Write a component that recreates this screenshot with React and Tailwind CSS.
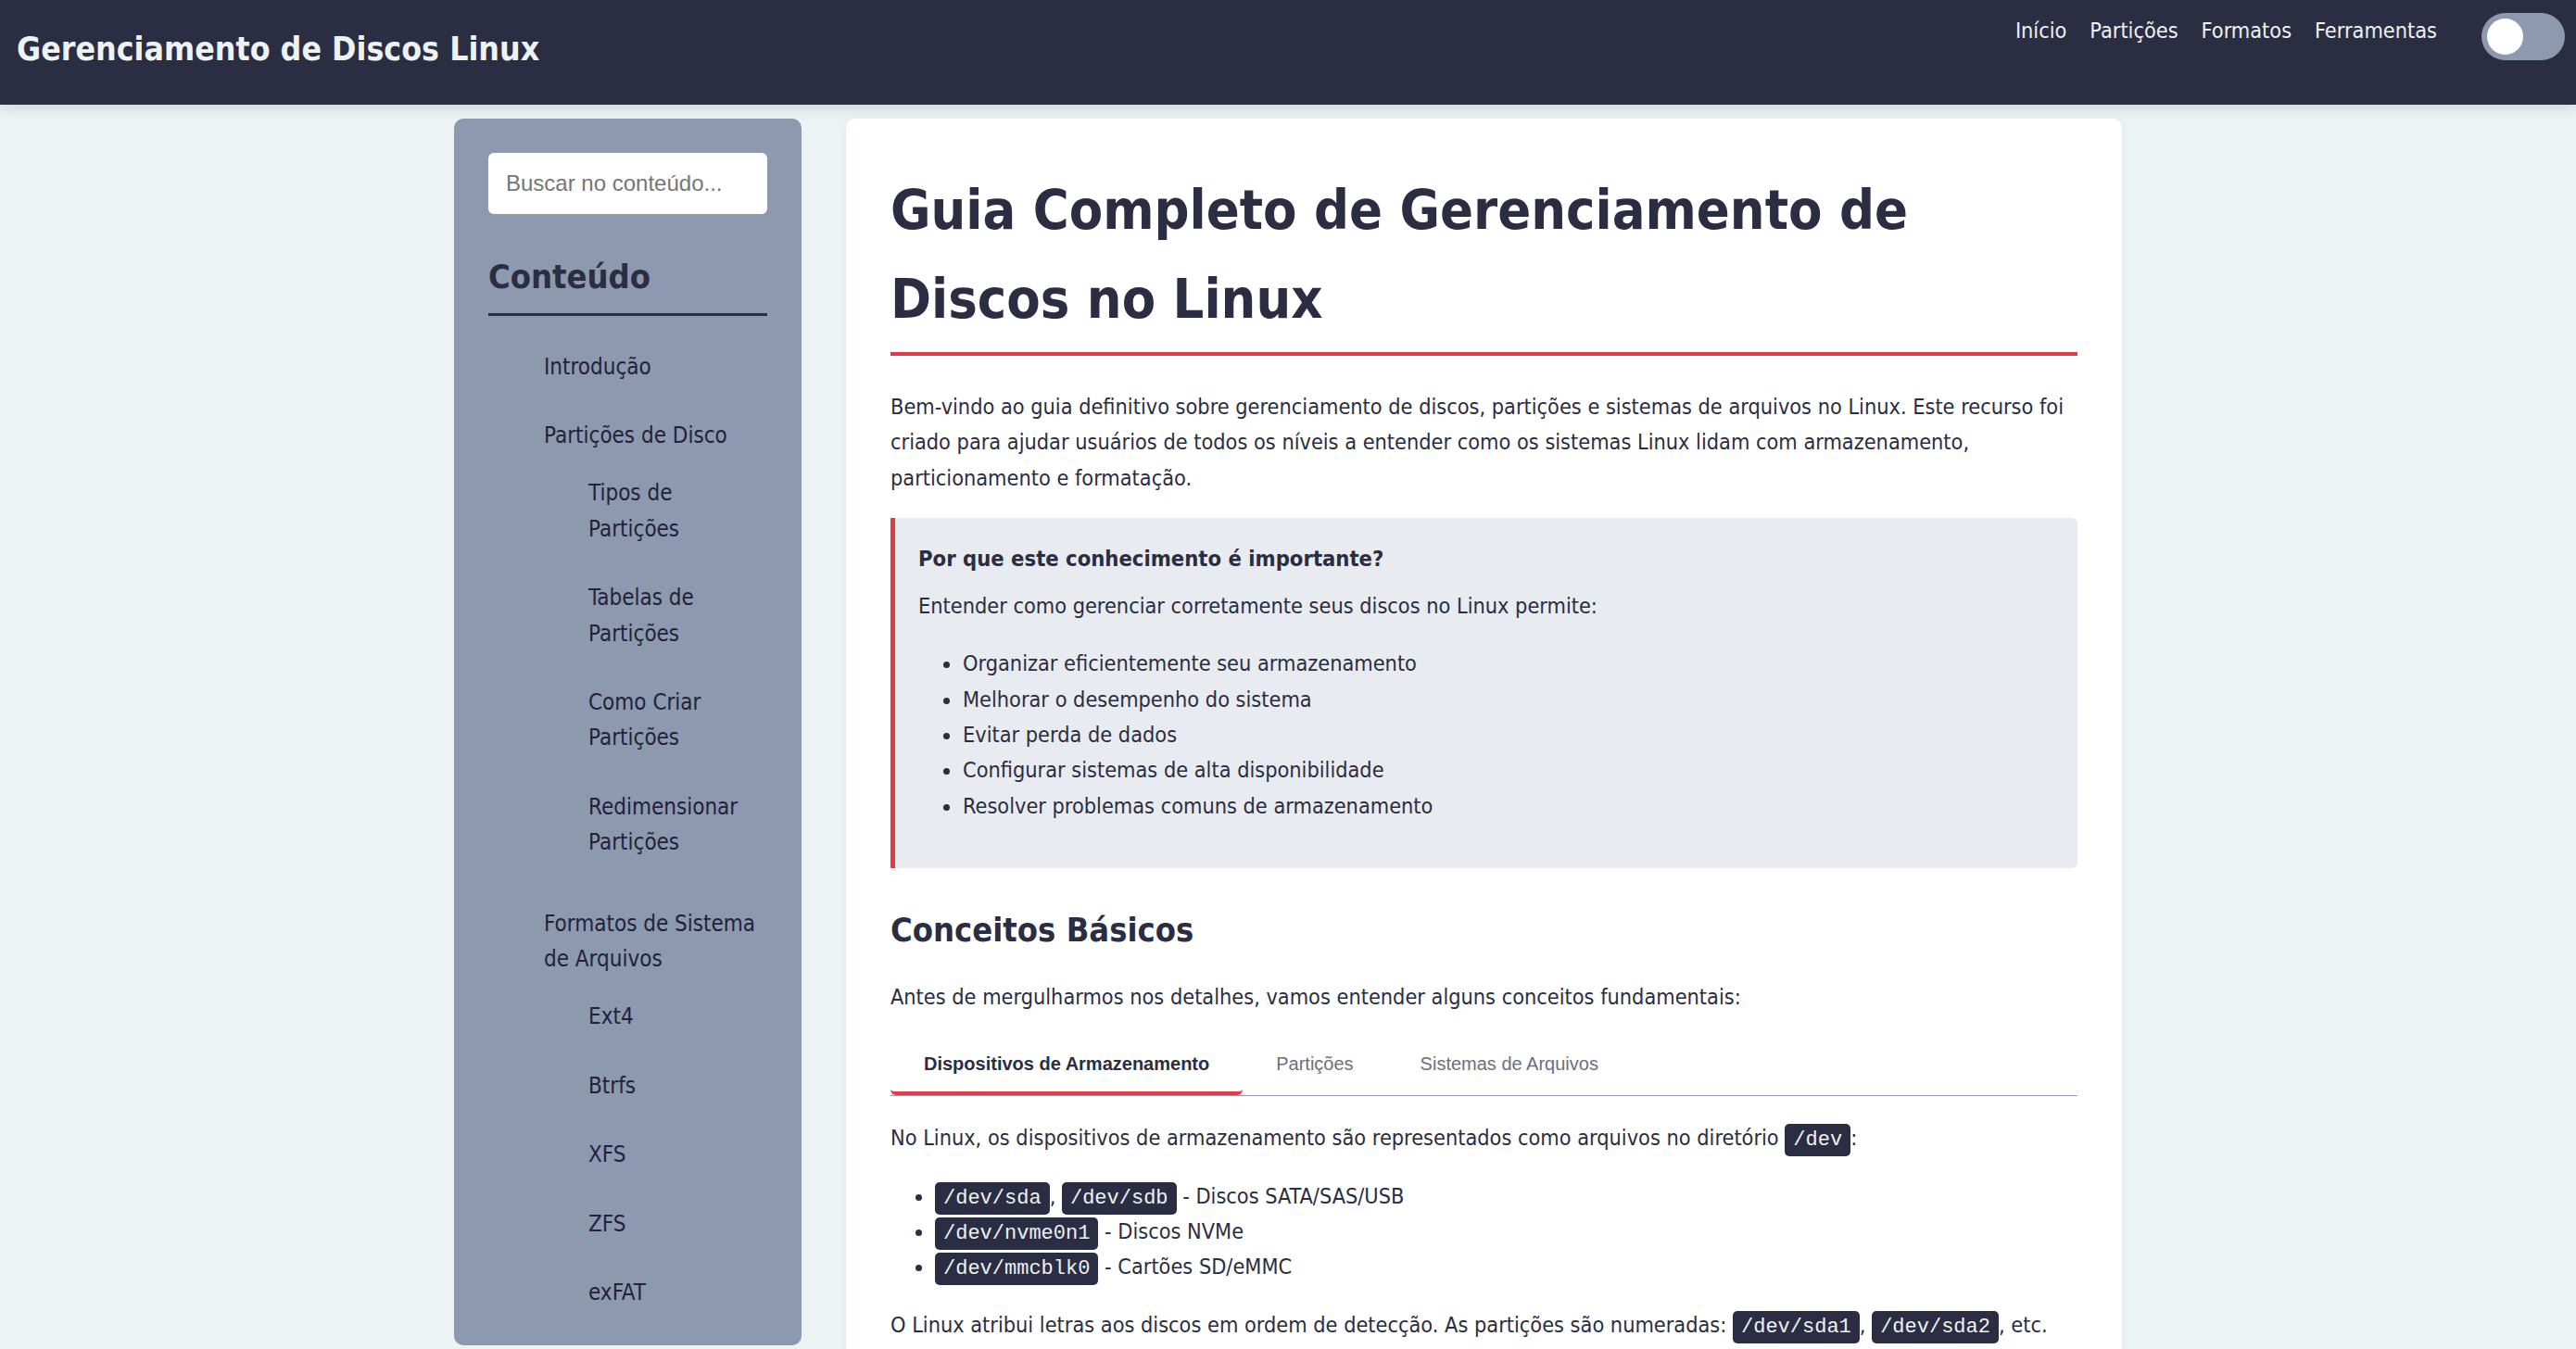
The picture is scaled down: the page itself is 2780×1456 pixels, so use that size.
import { useState } from "react";

const NAV_LINKS = ["Início", "Partições", "Formatos", "Ferramentas"];

const TOC = [
  { label: "Introdução" },
  {
    label: "Partições de Disco",
    children: [
      "Tipos de Partições",
      "Tabelas de Partições",
      "Como Criar Partições",
      "Redimensionar Partições",
    ],
  },
  {
    label: "Formatos de Sistema de Arquivos",
    children: ["Ext4", "Btrfs", "XFS", "ZFS", "exFAT"],
  },
];

const TABS = ["Dispositivos de Armazenamento", "Partições", "Sistemas de Arquivos"];

const REASONS = [
  "Organizar eficientemente seu armazenamento",
  "Melhorar o desempenho do sistema",
  "Evitar perda de dados",
  "Configurar sistemas de alta disponibilidade",
  "Resolver problemas comuns de armazenamento",
];

function Code({ children }) {
  return (
    <code className="rounded-[5px] bg-[#2b2d42] px-[9px] py-[5px] font-['Liberation_Mono',monospace] text-[22px] leading-none text-[#edf2f4]">
      {children}
    </code>
  );
}

function Header() {
  const [dark, setDark] = useState(false);
  return (
    <header className="relative z-10 flex h-[113px] items-start justify-between bg-[#2b2d42] pl-[18px] pr-[12px] shadow-[0_4px_14px_rgba(0,0,0,0.12)]">
      <h1 className="mt-[24px] text-[35.4px] font-bold leading-[57px] text-[#edf2f4]">
        Gerenciamento de Discos Linux
      </h1>
      <div className="mt-[14px] flex items-start">
        <nav className="flex gap-[25px] text-[23.3px] leading-[38px] text-[#edf2f4]">
          {NAV_LINKS.map((l) => (
            <a key={l} href="#">
              {l}
            </a>
          ))}
        </nav>
        <button
          type="button"
          onClick={() => setDark(!dark)}
          className="ml-[48px] flex h-[51px] w-[90px] items-center rounded-full bg-[#8d99ae] px-[6px]"
        >
          <span
            className={`block h-[39px] w-[39px] rounded-full bg-white ${dark ? "ml-auto" : ""}`}
          />
        </button>
      </div>
    </header>
  );
}

function Sidebar() {
  return (
    <aside className="h-[1324px] w-[375px] shrink-0 overflow-hidden rounded-[10px] bg-[#8d99ae] p-[37px]">
      <input
        type="text"
        placeholder="Buscar no conteúdo..."
        className="h-[66px] w-full rounded-[6px] bg-white px-[19px] font-['Liberation_Sans',Arial,sans-serif] text-[24px] text-[#2b2d42] placeholder:text-[#767676] outline-none"
      />
      <h2 className="mt-[39px] mb-[24px] border-b-[3px] border-[#2b2d42] pb-[10px] text-[36px] font-bold leading-[1.6] text-[#2b2d42]">
        Conteúdo
      </h2>
      <ul className="pl-[48px]">
        {TOC.map((item) => (
          <li key={item.label} className="mb-[12px]">
            <a href="#" className="block px-[12px] py-[12px] leading-[38.4px] text-[#22223b]">
              {item.label}
            </a>
            {item.children && (
              <ul className="pb-px pl-[48px]">
                {item.children.map((c) => (
                  <li key={c} className="mb-[12px]">
                    <a href="#" className="block px-[12px] py-[12px] leading-[38.4px] text-[#22223b]">
                      {c}
                    </a>
                  </li>
                ))}
              </ul>
            )}
          </li>
        ))}
      </ul>
    </aside>
  );
}

function Tabs() {
  const [active, setActive] = useState(0);
  return (
    <div>
      <div className="mb-[26px] flex border-b border-[#8d99ae]">
        {TABS.map((t, i) => (
          <button
            key={t}
            type="button"
            onClick={() => setActive(i)}
            className={`rounded-[6px] border-b-4 px-[36px] py-[18px] font-['Liberation_Sans',Arial,sans-serif] text-[20px] leading-[23px] ${
              active === i
                ? "border-[#e63946] font-bold text-[#2b2d42]"
                : "border-transparent text-[#6c6f7d]"
            }`}
          >
            {t}
          </button>
        ))}
      </div>
      <p className="mb-[24px]">
        No Linux, os dispositivos de armazenamento são representados como arquivos no diretório{" "}
        <Code>/dev</Code>:
      </p>
      <ul className="mb-[24px] list-disc pl-[48px]">
        <li>
          <Code>/dev/sda</Code>, <Code>/dev/sdb</Code> - Discos SATA/SAS/USB
        </li>
        <li>
          <Code>/dev/nvme0n1</Code> - Discos NVMe
        </li>
        <li>
          <Code>/dev/mmcblk0</Code> - Cartões SD/eMMC
        </li>
      </ul>
      <p className="mb-[24px]">
        O Linux atribui letras aos discos em ordem de detecção. As partições são numeradas:{" "}
        <Code>/dev/sda1</Code>, <Code>/dev/sda2</Code>, etc.
      </p>
    </div>
  );
}

export default function App() {
  return (
    <div className="min-h-screen bg-[#edf2f4] font-['DejaVu_Sans_Condensed','DejaVu_Sans',sans-serif] text-[24px] leading-[1.6] text-[#2b2d42]">
      <Header />
      <div className="mx-auto flex w-[1800px] items-start gap-[48px] pt-[15px]">
        <Sidebar />
        <main className="flex-1 rounded-[10px] bg-white px-[48px] pt-[51px] pb-[48px] text-[23.3px] leading-[38.4px] shadow-[0_2px_10px_rgba(0,0,0,0.06)]">
          <h1 className="mb-[36px] border-b-4 border-[#e63946] pb-[9px] text-[59px] font-bold leading-[96px]">
            Guia Completo de Gerenciamento de Discos no Linux
          </h1>
          <p className="mb-[24px]">
            Bem-vindo ao guia definitivo sobre gerenciamento de discos, partições e sistemas de
            arquivos no Linux. Este recurso foi criado para ajudar usuários de todos os níveis a
            entender como os sistemas Linux lidam com armazenamento, particionamento e formatação.
          </p>
          <div className="mb-[38px] rounded-r-[6px] border-l-[5px] border-[#e63946] bg-[#e8ebef] p-[24px] pl-[25px]">
            <h3 className="mb-[10px] text-[23.6px] font-bold leading-[41.6px]">
              Por que este conhecimento é importante?
            </h3>
            <p className="mb-[24px]">
              Entender como gerenciar corretamente seus discos no Linux permite:
            </p>
            <ul className="mb-[24px] list-disc pl-[48px]">
              {REASONS.map((r) => (
                <li key={r}>{r}</li>
              ))}
            </ul>
          </div>
          <h2 className="mb-[24px] text-[36px] font-bold leading-[57.6px]">Conceitos Básicos</h2>
          <p className="mb-[24px]">
            Antes de mergulharmos nos detalhes, vamos entender alguns conceitos fundamentais:
          </p>
          <Tabs />
        </main>
      </div>
    </div>
  );
}
